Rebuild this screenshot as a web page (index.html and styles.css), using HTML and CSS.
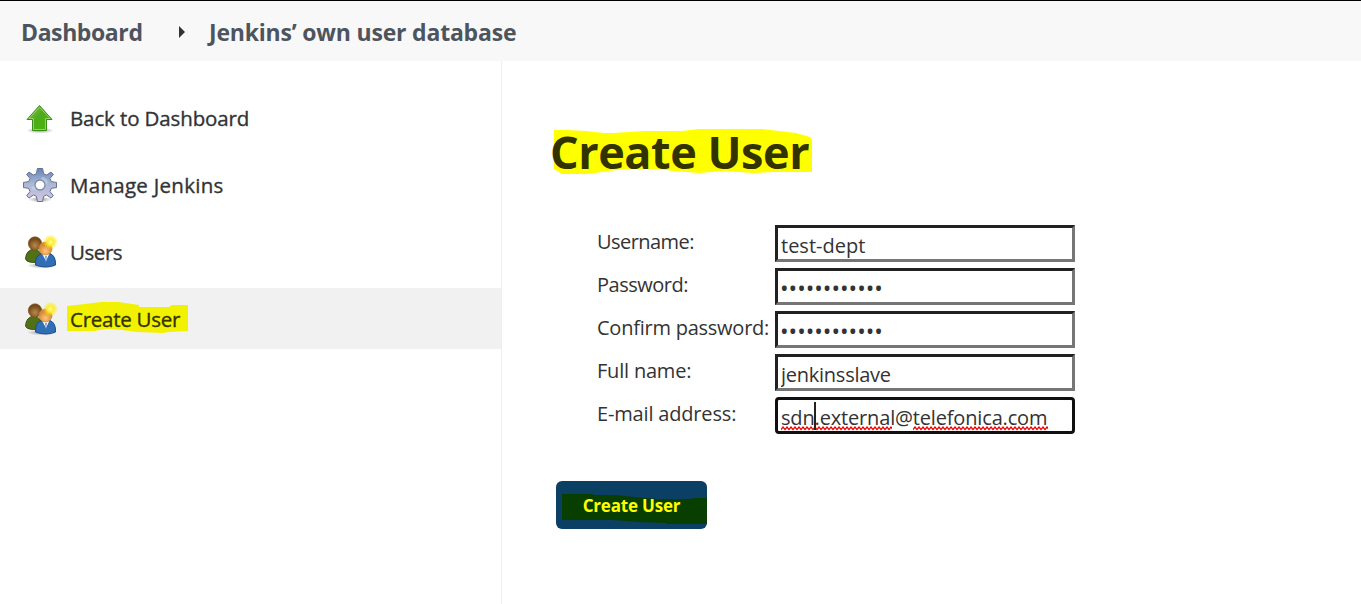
FILE: index.html
```html
<!DOCTYPE html>
<html lang="en">
<head>
<meta charset="utf-8">
<title>Create User [Jenkins]</title>
<link rel="stylesheet" href="styles.css">
</head>
<body>
<svg class="defs" width="0" height="0" aria-hidden="true">
  <defs>
    <linearGradient id="green" x1="0" y1="0" x2="1" y2="1"><stop offset="0" stop-color="#8ac653"/><stop offset=".45" stop-color="#4eaa1c"/><stop offset="1" stop-color="#43bd03"/></linearGradient>
    <linearGradient id="steel" x1="0" y1="0" x2="0" y2="1"><stop offset="0" stop-color="#6484b8"/><stop offset=".45" stop-color="#a9b7d5"/><stop offset="1" stop-color="#d3c5e3"/></linearGradient>
    <radialGradient id="brown" cx=".5" cy=".65"><stop offset="0" stop-color="#b98a4c"/><stop offset="1" stop-color="#77491a"/></radialGradient>
    <radialGradient id="skin" cx=".5" cy=".7"><stop offset="0" stop-color="#ffc67e"/><stop offset="1" stop-color="#d98a34"/></radialGradient>
    <radialGradient id="glow"><stop offset="0" stop-color="#fffb9c"/><stop offset=".4" stop-color="#ffed35"/><stop offset="1" stop-color="#ffe800" stop-opacity="0"/></radialGradient>
    <radialGradient id="shade"><stop offset="0" stop-color="#000" stop-opacity=".4"/><stop offset="1" stop-color="#000" stop-opacity="0"/></radialGradient>
    <symbol id="people" viewBox="0 0 36 36">
      <ellipse cx="20" cy="31.500" rx="15" ry="3" fill="url(#shade)"/>
      <path d="M3.500 25Q4 16 12 15Q20 16 20 27Q11 30 5 27Z" fill="#527017" stroke="#3c5610"/>
      <circle cx="13" cy="9.500" r="6.700" fill="url(#brown)" stroke="#75501f" stroke-width=".6"/>
      <path d="M13.500 31Q13 21 20 19.500H28Q34 22 33.500 31Q24 35 13.500 31Z" fill="#316eb5" stroke="#1b4d8e"/>
      <path d="M20 19.500L24 27L27.500 19.500Z" fill="#fff"/>
      <path d="M23 22L24 29L25 22Z" fill="#7aa0cf"/>
      <circle cx="23.500" cy="14.500" r="6.500" fill="url(#skin)" stroke="#cc812e" stroke-width=".7"/>
      <circle cx="28.500" cy="8" r="7.500" fill="url(#glow)"/>
    </symbol>
  </defs>
</svg>
<header class="crumbs">
  <a class="crumb crumb-home">Dashboard</a>
  <svg class="crumb-arrow" width="6" height="12" viewBox="0 0 6 12"><path d="M0 0L6 6L0 12Z" fill="#333"/></svg>
  <a class="crumb crumb-realm">Jenkins’ own user database</a>
</header>
<div class="page">
  <nav class="side">
    <a class="task">
      <svg class="icon" width="36" height="36" viewBox="0 0 36 36"><ellipse cx="18" cy="30.500" rx="14" ry="3" fill="url(#shade)"/><path d="M17.500 5.500L30 19.500H24.500V30.500H10.500V19.500H5Z" fill="url(#green)" stroke="#3d8c1b"/><path d="M17.500 7.200L28 18.500H23.500V29.500H11.500V18.500H7Z" fill="none" stroke="#a5dc79" stroke-width=".8"/></svg>
      <span class="task-label t-back">Back to Dashboard</span>
    </a>
    <a class="task">
      <svg class="icon" width="36" height="36" viewBox="0 0 36 36"><ellipse cx="18" cy="32.500" rx="12" ry="3" fill="url(#shade)"/><g transform="translate(18 18)"><path d="M-2.600 -16.500H2.600L3.600 -11.300L6.600 -10L11 -12.900L13.400 -10.500L10 -6.600L11.400 -3.300L16.500 -2.600V2.600L11.400 3.300L10 6.600L13.400 10.700L11 13.100L6.600 10L3.600 11.300L2.600 16.500H-2.600L-3.600 11.300L-6.600 10L-11 13.100L-13.400 10.700L-10 6.600L-11.400 3.300L-16.500 2.600V-2.600L-11.400 -3.300L-10 -6.600L-13.400 -10.500L-11 -12.900L-6.600 -10L-3.600 -11.300Z" fill="url(#steel)" stroke="#68728f" stroke-linejoin="round"/><path d="M-9 2Q-3 1 2 -8Q6 -8 8 -3Q5 3 -7 5Z" fill="#d8dfec" opacity=".45"/><circle r="5" fill="#fff" stroke="#7d89a8" stroke-width="1.300"/></g></svg>
      <span class="task-label t-manage">Manage Jenkins</span>
    </a>
    <a class="task">
      <svg class="icon" width="36" height="36"><use href="#people"/></svg>
      <span class="task-label t-users">Users</span>
    </a>
    <a class="task task-active">
      <svg class="icon" width="36" height="36"><use href="#people"/></svg>
      <span class="marked"><svg class="marker marker-task" width="121" height="34" viewBox="0 0 121 34"><path d="M0 5L18 3L34 1H51L72 4V6H102L105 4H121V30L102 31L96 32L70 31L55 29L40 28L27 30H0Z" fill="#f2f200"/></svg><span class="task-label t-create">Create User</span></span>
    </a>
  </nav>
  <main class="main">
    <h1 class="title marked"><svg class="marker marker-title" width="260" height="46" viewBox="0 0 260 46"><path d="M0 2H12L32 3L50 5H60L90 3H128L145 1H208L225 3L242 5L256 9L258 12V44H219L200 45L170 43L145 45L120 43L103 41L70 41L48 44L33 46H8L0 41Z" fill="#ff0"/></svg><span class="title-text">Create User</span></h1>
    <form class="form">
      <label class="label l-user" for="u">Username:</label><input class="field" id="u" value="test-dept">
      <label class="label l-pass" for="p">Password:</label><input class="field dots" id="p" value="••••••••••••">
      <label class="label l-confirm" for="c">Confirm password:</label><input class="field dots" id="c" value="••••••••••••">
      <label class="label l-full" for="n">Full name:</label><input class="field f-full" id="n" value="jenkinsslave">
      <span class="label l-mail">E-mail address:</span>
      <div class="field focused"><span class="mail">sdn.external@telefonica.com</span>
        <svg class="squiggle" width="268" height="5" viewBox="0 0 268 5"><defs><pattern id="wave" width="4" height="5" patternUnits="userSpaceOnUse"><path d="M-1 2.500L0 3.500L2 1L4 3.500L5 2.500" fill="none" stroke="#f00000" stroke-width="1.300"/></pattern></defs><path d="M0 0H111V5H0ZM132 0H267V5H132Z" fill="url(#wave)"/></svg>
        <i class="caret"></i></div>
    </form>
    <button class="submit marked" type="button"><svg class="marker marker-button" width="145" height="31" viewBox="0 0 145 31"><path d="M0 1H31V2H52L73 4L95 6H130V5H145V31H105V30L77 29L50 27H0Z" fill="#083e00"/></svg><span class="submit-text">Create User</span></button>
  </main>
</div>
</body>
</html>
```
FILE: styles.css
```css
* { box-sizing: border-box; }
body { margin: 0; height: 604px; overflow: hidden; background: #fff; color: #333; font-family: "Open Sans", "Noto Sans", sans-serif; display: flex; flex-direction: column; }
.defs { position: absolute; }
.crumbs { height: 61px; flex: none; display: flex; align-items: center; padding: 2px 0 0 21px; background: #f8f8f8; border-top: 1px solid #000; }
.crumb { font-size: 23px; font-weight: 700; color: #4d545d; white-space: nowrap; line-height: 32px; }
.crumb-home { width: 158px; letter-spacing: -0.4px; }
.crumb-realm { margin-left: 24px; letter-spacing: -0.2px; }
.page { flex: 1; display: flex; }
.side { width: 502px; border-right: 1px solid #eee; padding-top: 26px; }
.task { display: flex; align-items: center; height: 61px; margin-bottom: 6px; padding-left: 22px; }
.task-active { background: #f1f1f1; width: 501px; }
.icon { flex: none; margin-right: 12px; }
.task-label { font-size: 20.5px; white-space: nowrap; position: relative; -webkit-text-stroke: 0.35px currentColor; }
.t-back { letter-spacing: -0.12px; }
.t-manage { letter-spacing: 0.28px; }
.t-users { letter-spacing: -0.45px; }
.t-create { color: #333300; letter-spacing: -0.25px; }
.marked { position: relative; }
.marker { position: absolute; }
.marker-task { left: -3px; top: -4px; }
.main { padding: 60px 0 0 50px; }
.title { margin: 0; height: 62px; line-height: 62px; font-size: 45px; font-weight: 700; white-space: nowrap; color: #333300; }
.title-text { position: relative; margin-left: -2px; letter-spacing: -0.45px; }
.marker-title { left: 2px; top: 7px; }
.form { margin: 42px 0 0 45px; display: grid; grid-template-columns: 178px 300px; grid-auto-rows: 37px; row-gap: 6px; }
.label { font-size: 20px; line-height: 34px; white-space: nowrap; }
.l-user { letter-spacing: -0.55px; }
.l-pass { letter-spacing: -0.5px; }
.l-confirm { letter-spacing: -0.24px; }
.l-full { letter-spacing: -0.2px; }
.l-mail { letter-spacing: -0.17px; }
.field { width: 300px; height: 37px; border: 3px solid; border-color: #212121 #767676 #767676 #212121; padding: 3px 3px 0; margin: 0; background: #fff; color: #333; font: 400 20px/28px "Open Sans", sans-serif; outline: none; white-space: nowrap; }
.dots { font-size: 22.8px; padding: 4px 2px 0; }
.f-full { letter-spacing: -0.25px; }
.focused { position: relative; border: 3px solid #101010; border-radius: 4px; padding-top: 4px; letter-spacing: -0.16px; }
.squiggle { position: absolute; left: 3px; bottom: 0; }
.caret { position: absolute; left: 36px; top: 2px; width: 2px; height: 28px; background: #222; }
.submit { display: block; width: 151px; height: 48px; margin: 47px 0 0 4px; padding: 2px 0 0; border: 0; border-radius: 6px; background: #0b3f63; color: #ff0; font: 700 17px/46px "Open Sans", sans-serif; letter-spacing: -0.2px; }
.submit-text { position: relative; }
.marker-button { left: 6px; top: 12px; }
```
